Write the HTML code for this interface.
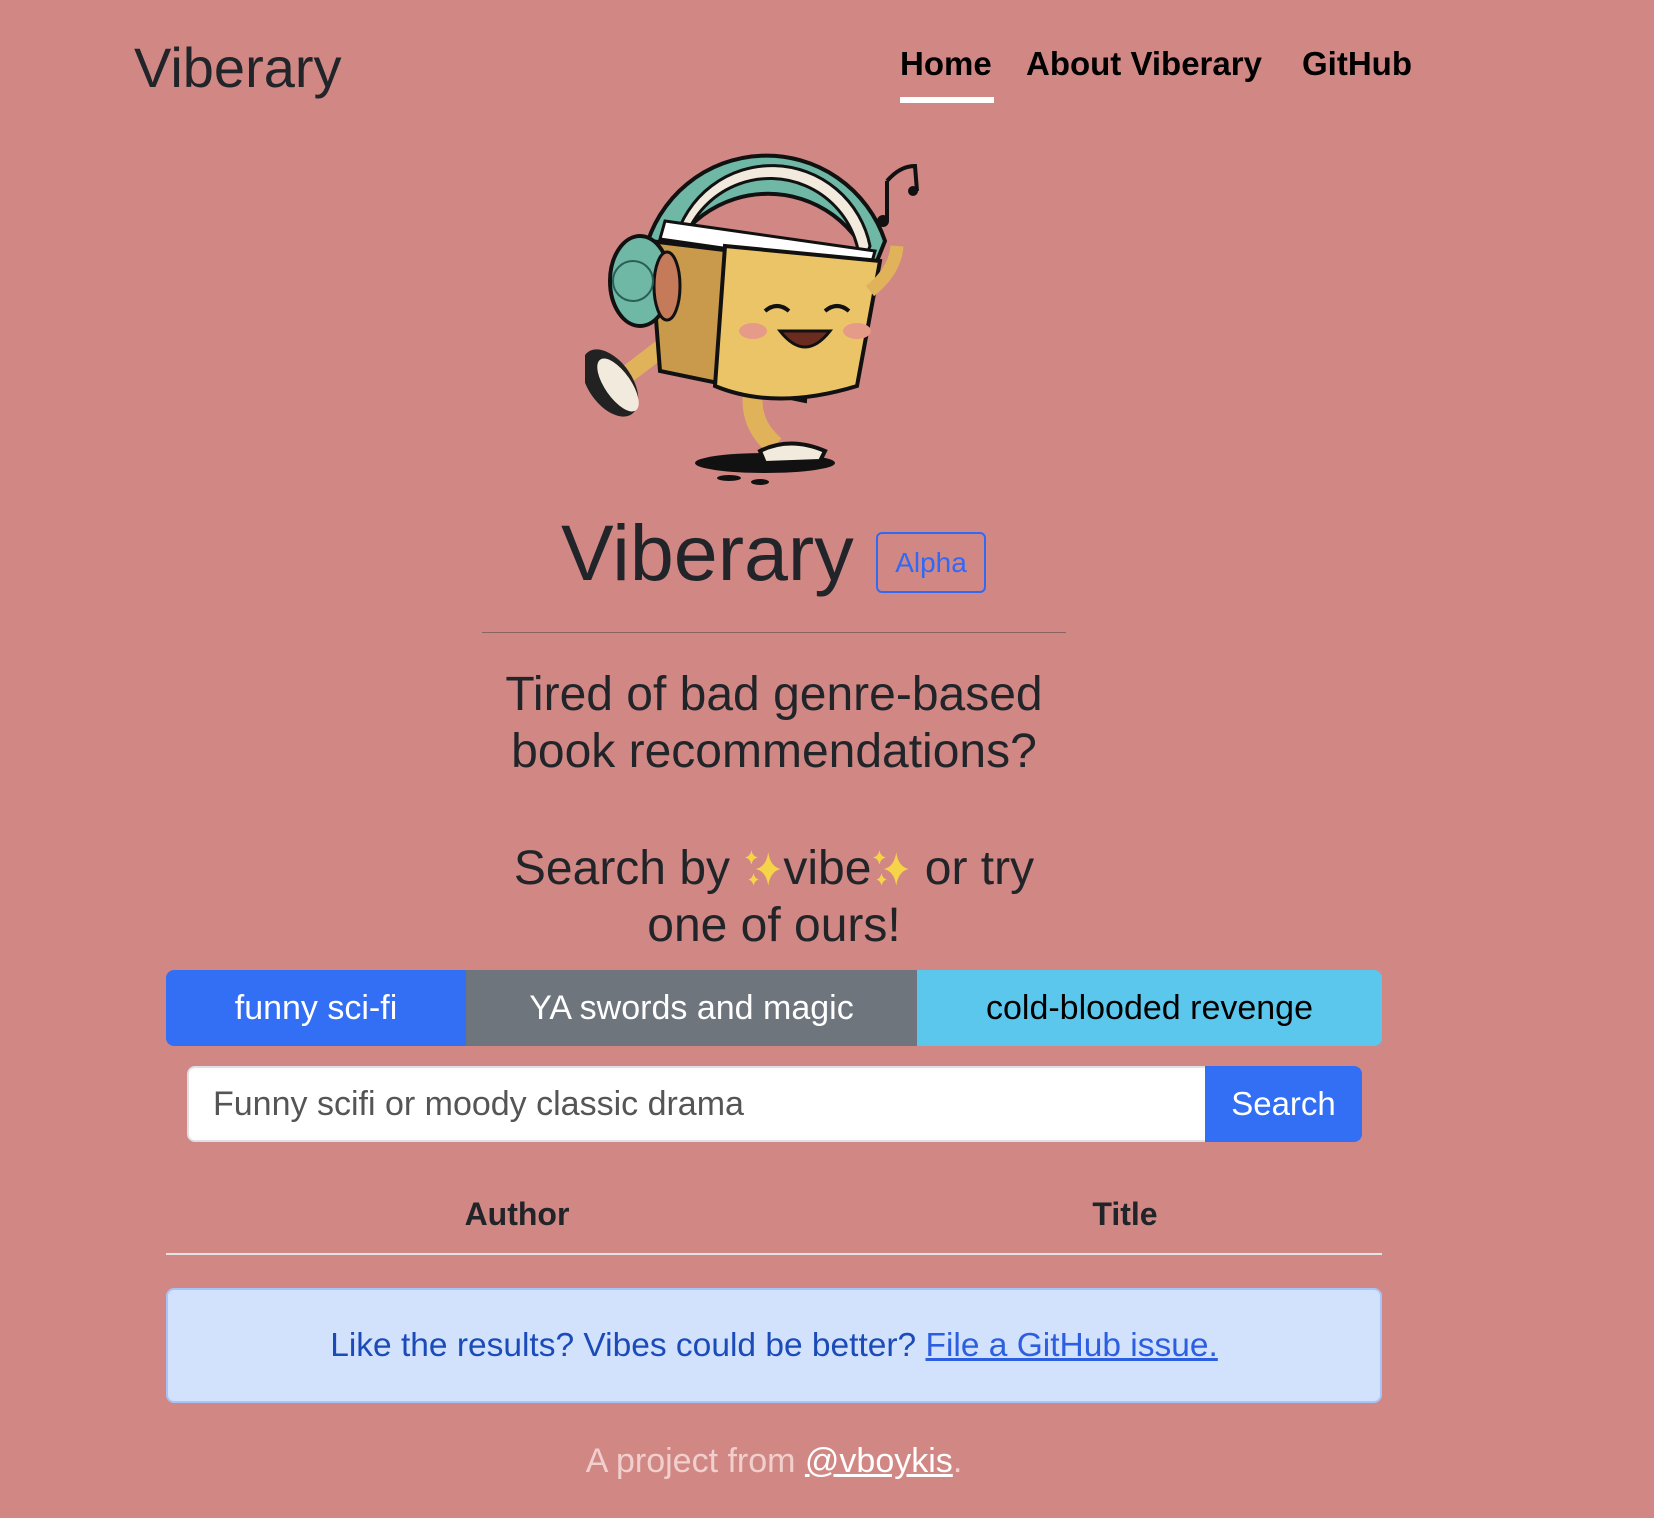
<!DOCTYPE html>
<html><head><meta charset="utf-8"><style>
html,body{margin:0;padding:0;}
body{width:1654px;height:1518px;background:#d18784;font-family:"Liberation Sans",sans-serif;color:#212529;position:relative;overflow:hidden;}
.a{position:absolute;white-space:nowrap;}
.c{text-align:center;}
</style></head><body>
<div class="a" style="left:134px;top:36px;font-size:56px;line-height:64px;">Viberary</div>
<div class="a" style="left:900px;top:44px;font-size:33px;font-weight:bold;color:#000;line-height:40px;">Home</div>
<div class="a" style="left:900px;top:97px;width:94px;height:6px;background:#fff;"></div>
<div class="a" style="left:1026px;top:44px;font-size:33px;font-weight:bold;color:#000;line-height:40px;">About Viberary</div>
<div class="a" style="left:1302px;top:44px;font-size:33px;font-weight:bold;color:#000;line-height:40px;">GitHub</div>

<svg class="a" style="left:585px;top:121px" width="380" height="365" viewBox="0 0 380 365">
 <ellipse cx="180" cy="342" rx="70" ry="10" fill="#111"/>
 <ellipse cx="144" cy="357" rx="12" ry="3" fill="#111"/><ellipse cx="175" cy="361" rx="9" ry="3" fill="#111"/>
 <path d="M60 130 A125 125 0 0 1 300 120 L288 150 A110 110 0 0 0 78 150 Z" fill="#6fb8a6" stroke="#111" stroke-width="4"/>
 <path d="M90 120 A100 100 0 0 1 285 125 L275 150 A90 90 0 0 0 95 145 Z" fill="#f2ebdd" stroke="#111" stroke-width="3"/>
 <path d="M105 205 Q60 240 40 255 Q20 262 5 255" stroke="#e0b35a" stroke-width="18" fill="none"/>
 <path d="M170 260 Q160 300 190 325" stroke="#e0b35a" stroke-width="20" fill="none"/>
 <ellipse cx="25" cy="262" rx="22" ry="38" transform="rotate(-35 25 262)" fill="#222"/>
 <ellipse cx="33" cy="264" rx="13" ry="31" transform="rotate(-35 33 264)" fill="#f2ebdd"/>
 <path d="M175 330 Q205 315 240 330 L235 340 L180 342 Z" fill="#f2ebdd" stroke="#111" stroke-width="4"/>
 <path d="M65 120 L230 140 L220 280 L75 250 Z" fill="#c99a4c" stroke="#111" stroke-width="4"/>
 <path d="M80 100 L290 130 L285 148 L75 118 Z" fill="#fff" stroke="#111" stroke-width="3"/>
 <path d="M140 125 L295 140 L272 265 Q190 290 130 265 Z" fill="#ecc468" stroke="#111" stroke-width="4"/>
 <path d="M285 170 Q310 150 312 125" stroke="#e0b35a" stroke-width="13" fill="none"/>
 <path d="M180 190 q12-10 24 0 M240 190 q12-10 24 0" stroke="#111" stroke-width="4" fill="none"/>
 <path d="M195 210 q25 32 50 0 Z" fill="#6b2b1e" stroke="#111" stroke-width="3"/>
 <ellipse cx="168" cy="210" rx="14" ry="8" fill="#e69a88"/><ellipse cx="272" cy="210" rx="14" ry="8" fill="#e69a88"/>
 <ellipse cx="55" cy="160" rx="30" ry="45" fill="#6fb8a6" stroke="#111" stroke-width="4"/>
 <ellipse cx="82" cy="165" rx="13" ry="34" fill="#c57a5a" stroke="#111" stroke-width="3"/>
 <circle cx="48" cy="160" r="20" fill="none" stroke="#2b5e56" stroke-width="2"/>
 <path d="M302 60 L302 100 M302 60 Q315 45 330 45 L332 70" stroke="#111" stroke-width="4" fill="none"/>
 <circle cx="298" cy="100" r="6" fill="#111"/><circle cx="328" cy="70" r="5" fill="#111"/>
</svg>

<div class="a" style="left:561px;top:508px;font-size:79px;line-height:90px;">Viberary</div>
<div class="a c" style="left:876px;top:532px;width:106px;height:57px;border:2px solid #3169f5;border-radius:6px;color:#3169f5;font-size:28px;line-height:57px;">Alpha</div>
<div class="a" style="left:482px;top:632px;width:584px;height:1px;background:#8c6362;"></div>

<div class="a c" style="left:424px;top:666px;width:700px;font-size:48px;line-height:57px;">Tired of bad genre-based<br>book recommendations?</div>
<div class="a c" style="left:424px;top:840px;width:700px;font-size:48px;line-height:57px;">Search by <svg width="40" height="42" viewBox="0 0 38 40" style="vertical-align:-6px"><path d="M24 4 Q26 18 36 20 Q26 22 24 36 Q22 22 12 20 Q22 18 24 4Z" fill="#f6d44a"/><path d="M8 2 Q9 8 14 9 Q9 10 8 16 Q7 10 2 9 Q7 8 8 2Z" fill="#f6d44a"/><path d="M10 24 Q11 29 15 30 Q11 31 10 36 Q9 31 5 30 Q9 29 10 24Z" fill="#f6d44a"/></svg>vibe<svg width="40" height="42" viewBox="0 0 38 40" style="vertical-align:-6px"><path d="M24 4 Q26 18 36 20 Q26 22 24 36 Q22 22 12 20 Q22 18 24 4Z" fill="#f6d44a"/><path d="M8 2 Q9 8 14 9 Q9 10 8 16 Q7 10 2 9 Q7 8 8 2Z" fill="#f6d44a"/><path d="M10 24 Q11 29 15 30 Q11 31 10 36 Q9 31 5 30 Q9 29 10 24Z" fill="#f6d44a"/></svg> or try<br>one of ours!</div>

<div class="a" style="left:166px;top:970px;width:1216px;height:76px;border-radius:8px;overflow:hidden;display:flex;font-size:34px;line-height:76px;">
 <div class="c" style="width:300px;background:#336ff5;color:#fff;">funny sci-fi</div>
 <div class="c" style="width:451px;background:#6e757d;color:#fff;">YA swords and magic</div>
 <div class="c" style="flex:1;background:#5cc7ec;color:#000;">cold-blooded revenge</div>
</div>

<div class="a" style="left:187px;top:1066px;width:1017px;height:72px;background:#fff;border:2px solid #dee2e6;border-radius:8px 0 0 8px;font-size:34px;line-height:72px;color:#555;"><span style="padding-left:24px">Funny scifi or moody classic drama</span></div>
<div class="a c" style="left:1205px;top:1066px;width:157px;height:76px;background:#336ff5;border-radius:0 8px 8px 0;color:#fff;font-size:33px;line-height:76px;">Search</div>

<div class="a c" style="left:417px;top:1194px;width:200px;font-size:32px;font-weight:bold;line-height:40px;">Author</div>
<div class="a c" style="left:1025px;top:1194px;width:200px;font-size:32px;font-weight:bold;line-height:40px;">Title</div>
<div class="a" style="left:166px;top:1253px;width:1216px;height:2px;background:#e4e4e4;"></div>

<div class="a c" style="left:166px;top:1288px;width:1212px;height:111px;background:#d2e1fc;border:2px solid #a8c3f7;border-radius:8px;font-size:33.5px;line-height:111px;color:#1a4bb8;">Like the results? Vibes could be better? <span style="text-decoration:underline;color:#2b5ee0">File a GitHub issue.</span></div>

<div class="a c" style="left:424px;top:1441px;width:700px;font-size:34px;line-height:40px;color:#f0cfcd;">A project from <span style="color:#fff;text-decoration:underline">@vboykis</span>.</div>
</body></html>
